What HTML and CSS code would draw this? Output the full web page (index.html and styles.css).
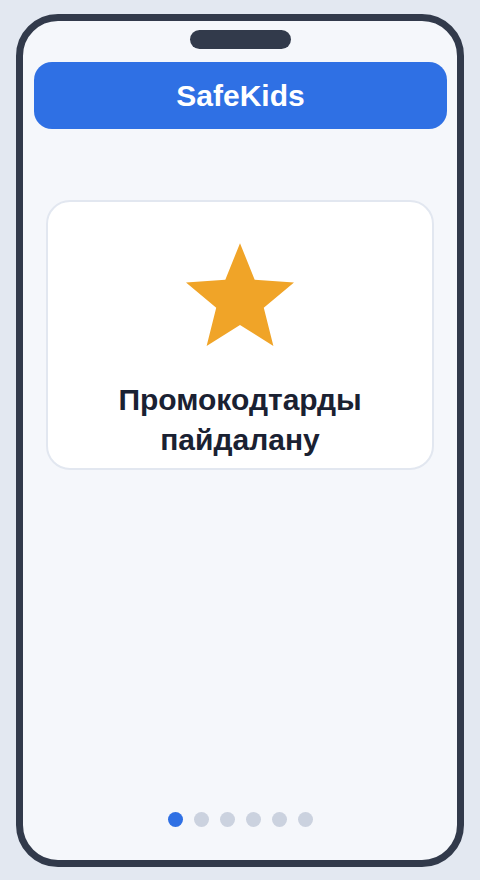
FILE: index.html
```html
<!DOCTYPE html>
<html lang="kk">
<head>
  <meta charset="UTF-8">
  <meta name="viewport" content="width=device-width, initial-scale=1.0">
  <title>SafeKids</title>
  <link rel="stylesheet" href="styles.css">
</head>
<body>
  <div class="phone">
    <div class="notch"></div>
    <div class="header">SafeKids</div>
    <div class="card">
      <svg class="star" width="108" height="103" viewBox="0 0 108 103">
        <polygon fill="#f0a428" points="54,0.2 68.69,36.77 108,39.45 77.78,64.73 87.39,102.95 54,82 20.61,102.95 30.22,64.73 0,39.45 39.31,36.77"/>
      </svg>
      <div class="card-title">Промокодтарды пайдалану</div>
    </div>
    <div class="dots">
      <span class="on"></span>
      <span></span>
      <span></span>
      <span></span>
      <span></span>
      <span></span>
    </div>
  </div>
</body>
</html>
```

FILE: styles.css
```css
* {margin: 0; padding: 0; box-sizing: border-box;}
body{
  background: #e3e8f1;
  padding: 14px 16px 13px;
  font-family: "Liberation Sans", Arial, sans-serif;
}
.phone {
  height: 853px;
  border: 7px solid #323a4b;
  border-radius: 42px;
  background: #f5f7fb;
  display: flex;
  flex-direction: column;
  overflow: hidden;
}
.notch {
  width: 101px;
  height: 19px;
  border-radius: 10px;
  background: #323a4b;
  margin: 9px auto 0;
}
.header {
  height: 67px;
  margin: 13px 10px 0 11px;
  border-radius: 18px;
  background: #2f70e4;
  color: #fff;
  font-size: 30px;
  font-weight: bold;
  display: flex;
  align-items: center;
  justify-content: center;
}
.card {
  height: 270px;
  margin: 71px 23px 0;
  background: #fff;
  border: 2px solid #e2e7f0;
  border-radius: 24px;
  display: flex;
  flex-direction: column;
  align-items: center;
  padding-top: 41px;
}
.star {
  display: block;
}
.card-title {
  margin-top: 34px;
  width: 300px;
  text-align: center;
  font-size: 30px;
  line-height: 40px;
  font-weight: bold;
  color: #1a2132;
}
.dots {
  margin-top: auto;
  margin-bottom: 33px;
  display: flex;
  justify-content: center;
  gap: 11px;
}
.dots span {
  width: 15px;
  height: 15px;
  border-radius: 50%;
  background: #cbd2df;
}
.dots .on {
  background: #2f70e4;
}
```
